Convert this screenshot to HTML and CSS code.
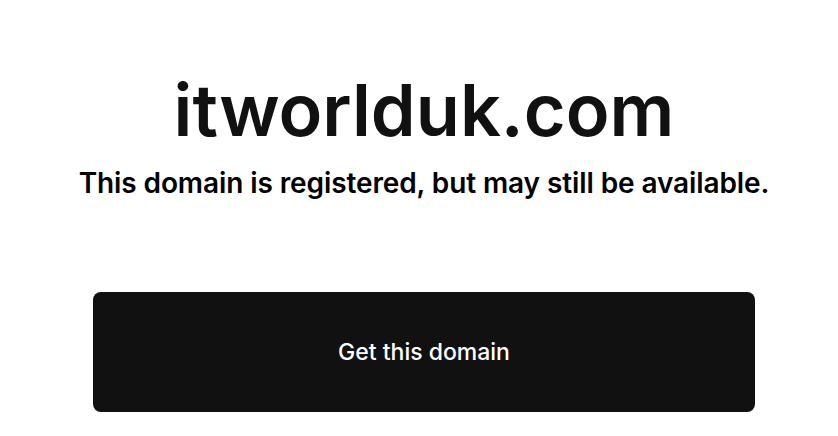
FILE: index.html
```html
<!DOCTYPE html>
<html lang="en">
<head>
  <meta charset="UTF-8" />
  <meta name="viewport" content="width=device-width, initial-scale=1.0"/>
  <title>itworlduk.com</title>
  <link rel="stylesheet" href="styles.css">
</head>
<body>
  <main class="landing">
    <h1 class="domain-name">itworlduk.com</h1>
    <p class="domain-status">This domain is registered, but may still be available.</p>
    <a class="get-btn" href="#">Get this domain</a>
  </main>
</body>
</html>
```

FILE: styles.css
```css
:root {
  --ink: #111111;
  --font-main: 'Inter', 'Noto Sans', sans-serif;
}

body {
  margin: 0;
  background: #ffffff;
  color: var(--ink);
  font-family: var(--font-main);
}

.landing {
  display: flex;
  flex-direction: column;
  align-items: center;
  padding: 66px 0 0 10px;
}

.domain-name {
  margin: 0;
  font-size: 72px;
  font-weight: 600;
  line-height: 88px;
  letter-spacing: 0;
}

.domain-status {
  margin: 11px 0 0;
  font-size: 28px;
  font-weight: 600;
  line-height: 36px;
  letter-spacing: -0.1px;
  color: #000;
}

.get-btn {
  margin-top: 91px;
  width: 662px;
  height: 120px;
  display: flex;
  align-items: center;
  justify-content: center;
  background: var(--ink);
  color: #fff;
  border-radius: 8px;
  font-size: 23px;
  font-weight: 500;
  text-decoration: none;
}
```
